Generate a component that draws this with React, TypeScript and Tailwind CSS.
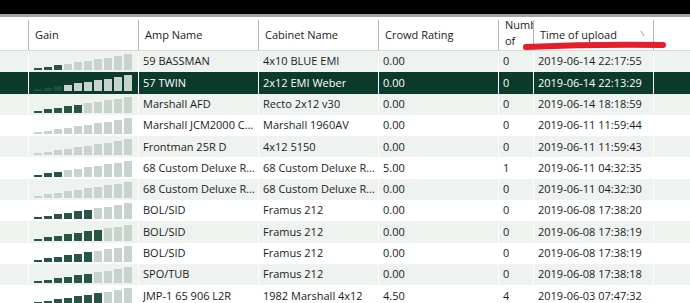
const COLS = "grid grid-cols-[28px_110px_120px_120px_120px_35px_120px_1fr]";

const BAR_HEIGHTS = [2, 3.5, 5, 6.5, 8, 9.5, 11, 12.5, 14, 16];

type Row = {
  gain: number;
  amp: string;
  cab: string;
  rating: string;
  num: string;
  time: string;
  selected?: boolean;
};

const rows: Row[] = [
  { gain: 3, amp: "59 BASSMAN", cab: "4x10 BLUE EMI", rating: "0.00", num: "0", time: "2019-06-14 22:17:55" },
  { gain: 3, amp: "57 TWIN", cab: "2x12 EMI Weber", rating: "0.00", num: "0", time: "2019-06-14 22:13:29", selected: true },
  { gain: 5, amp: "Marshall AFD", cab: "Recto 2x12 v30", rating: "0.00", num: "0", time: "2019-06-14 18:18:59" },
  { gain: 0, amp: "Marshall JCM2000 Combo", cab: "Marshall 1960AV", rating: "0.00", num: "0", time: "2019-06-11 11:59:44" },
  { gain: 0, amp: "Frontman 25R D", cab: "4x12 5150", rating: "0.00", num: "0", time: "2019-06-11 11:59:43" },
  { gain: 3, amp: "68 Custom Deluxe Reverb", cab: "68 Custom Deluxe Reverb", rating: "5.00", num: "1", time: "2019-06-11 04:32:35" },
  { gain: 0, amp: "68 Custom Deluxe Reverb", cab: "68 Custom Deluxe Reverb", rating: "0.00", num: "0", time: "2019-06-11 04:32:30" },
  { gain: 6, amp: "BOL/SID", cab: "Framus 212", rating: "0.00", num: "0", time: "2019-06-08 17:38:20" },
  { gain: 7, amp: "BOL/SID", cab: "Framus 212", rating: "0.00", num: "0", time: "2019-06-08 17:38:19" },
  { gain: 6, amp: "BOL/SID", cab: "Framus 212", rating: "0.00", num: "0", time: "2019-06-08 17:38:19" },
  { gain: 6, amp: "SPO/TUB", cab: "Framus 212", rating: "0.00", num: "0", time: "2019-06-08 17:38:18" },
  { gain: 7, amp: "JMP-1 65 906 L2R", cab: "1982 Marshall 4x12", rating: "4.50", num: "4", time: "2019-06-03 07:47:32" },
];

function GainBars({ value, selected }: { value: number; selected?: boolean }) {
  return (
    <div className="flex items-end gap-[2px] h-[16px] mt-[1px]">
      {BAR_HEIGHTS.map((h, i) => {
        const on = i < value;
        const color = on
          ? selected
            ? "bg-[#1f4e3c]"
            : "bg-[#275744]"
          : "bg-[#c9d3ce]";
        return <div key={i} className={`w-[8px] ${color}`} style={{ height: h }} />;
      })}
    </div>
  );
}

function Cell({ children, className = "" }: { children?: React.ReactNode; className?: string }) {
  return (
    <div className={`border-l border-white pl-[4px] flex items-center overflow-hidden whitespace-nowrap ${className}`}>
      <span className="truncate">{children}</span>
    </div>
  );
}

function HeaderCell({ children, className = "" }: { children?: React.ReactNode; className?: string }) {
  return (
    <div className={`border-l border-[#b5b5b5] pl-[6px] flex items-center overflow-hidden ${className}`}>
      {children}
    </div>
  );
}

export default function App() {
  return (
    <div className="relative w-[690px] h-[303px] overflow-hidden bg-white text-[11px] text-[#1b1b1b] font-['Open_Sans',sans-serif]">
      <div className="h-[14px] bg-black" />
      <div className="h-[3px] bg-[#a3a3a3]" />

      {/* header */}
      <div className={`${COLS} h-[34px] pt-[3px] border-b border-[#dadada]`}>
        <div />
        <HeaderCell>Gain</HeaderCell>
        <HeaderCell>Amp Name</HeaderCell>
        <HeaderCell>Cabinet Name</HeaderCell>
        <HeaderCell>Crowd Rating</HeaderCell>
        <div className="border-l border-[#b5b5b5] pl-[6px] overflow-hidden">
          <div className="-mt-[3px] leading-[16px] w-[60px]">
            Number
            <br />
            of
          </div>
        </div>
        <HeaderCell>
          <span>Time of upload</span>
          <svg className="ml-auto mr-[8px] -mt-[3px]" width="5" height="7" viewBox="0 0 5 7">
            <path d="M1 1 L4 6" stroke="#9a9a9a" strokeWidth="1" />
          </svg>
        </HeaderCell>
        <HeaderCell />
      </div>

      {/* body */}
      {rows.map((r, i) => {
        const bg = r.selected ? "bg-[#0c3b2c] text-white" : i % 2 === 0 ? "bg-[#eef3ef]" : "bg-white";
        return (
          <div key={i} className={`${COLS} h-[21.3px] ${bg}`}>
            <div />
            <div className="border-l border-white pl-[5px] flex items-center">
              <GainBars value={r.gain} selected={r.selected} />
            </div>
            <Cell>{r.amp}</Cell>
            <Cell>{r.cab}</Cell>
            <Cell>{r.rating}</Cell>
            <Cell>{r.num}</Cell>
            <Cell>{r.time}</Cell>
            <Cell />
          </div>
        );
      })}

      {/* red annotation underline */}
      <svg className="absolute left-[518px] top-[36px]" width="152" height="18" viewBox="0 0 152 18">
        <path d="M8 11 Q76 8 145 9" stroke="#e3202a" strokeWidth="6" strokeLinecap="round" fill="none" />
      </svg>
    </div>
  );
}
